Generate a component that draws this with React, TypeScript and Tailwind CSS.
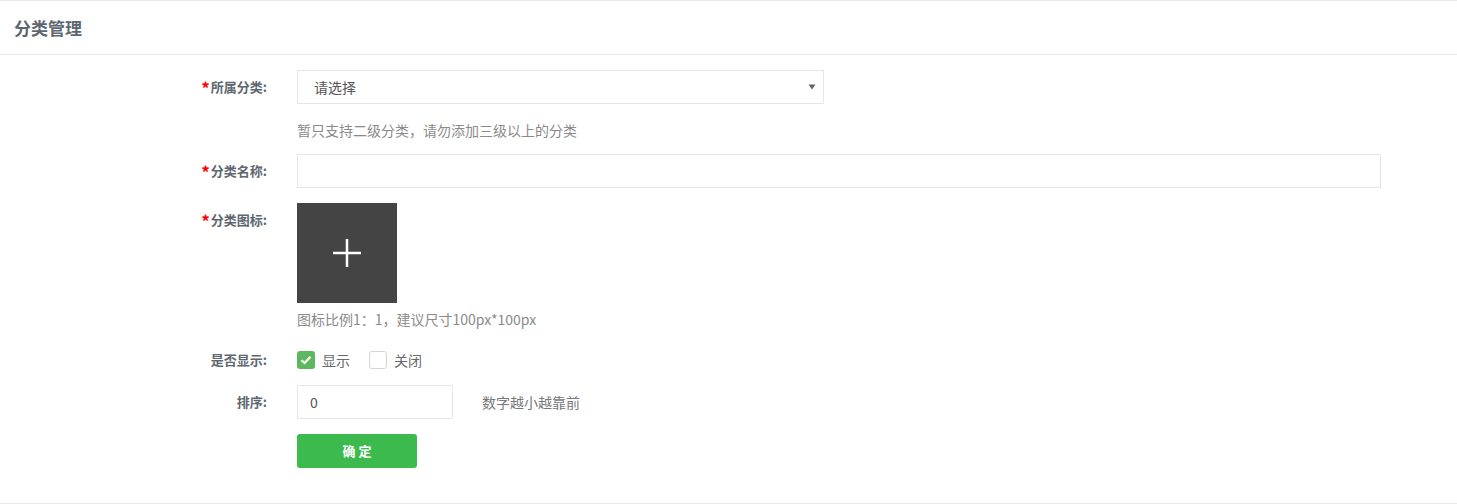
const font = {
  fontFamily: '"Noto Sans CJK SC", "Liberation Sans", sans-serif',
};

function Label({ text, required }: { text: string; required?: boolean }) {
  return (
    <div className="w-[267px] shrink-0 text-right text-[13px] font-bold leading-[34px] text-[#5e6770]">
      {required && (
        <span className="relative top-[3px] mr-[1px] text-[17px] leading-none text-[#ff0000]">*</span>
      )}
      {text}
    </div>
  );
}

function Check({ checked, label }: { checked?: boolean; label: string }) {
  return (
    <label className="flex items-center gap-[7px]">
      {checked ? (
        <span className="flex h-[18px] w-[18px] items-center justify-center rounded-[3px] bg-[#5cb85c]">
          <svg viewBox="0 0 18 18" className="h-[18px] w-[18px]">
            <path d="M4.5 9.2 L7.6 12 L13.5 5.8" fill="none" stroke="#fff" strokeWidth="2.2" />
          </svg>
        </span>
      ) : (
        <span className="h-[18px] w-[18px] rounded-[3px] border border-[#d5d5d5] bg-white" />
      )}
      <span className="text-[14px] text-[#676a6c]">{label}</span>
    </label>
  );
}

export default function App() {
  return (
    <div className="w-[1457px] bg-white" style={font}>
      <div className="flex h-[55px] items-center border-y border-[#e7eaec] pl-[14px]">
        <h5 className="text-[17px] font-bold text-[#5e6770]">分类管理</h5>
      </div>

      <div className="border-b border-[#e7eaec] pb-[35px] pt-[15px]">
        {/* 所属分类 */}
        <div className="flex">
          <Label text="所属分类:" required />
          <div className="ml-[30px]">
            <div className="flex h-[34px] w-[527px] items-center justify-between border border-[#e5e6e7] pl-[16px] pr-[7px]">
              <span className="text-[14px] text-[#555]">请选择</span>
              <svg viewBox="0 0 8 6" className="h-[6px] w-[8px]">
                <path d="M0.5 0.5 L7.5 0.5 L4 5.5 Z" fill="#5e6770" />
              </svg>
            </div>
            <p className="mt-[16px] text-[14px] leading-[20px] text-[#8a8a8a]">
              暂只支持二级分类，请勿添加三级以上的分类
            </p>
          </div>
        </div>

        {/* 分类名称 */}
        <div className="mt-[14px] flex">
          <Label text="分类名称:" required />
          <input
            className="ml-[30px] h-[34px] w-[1084px] border border-[#e5e6e7] px-3 text-[14px] outline-none"
            defaultValue=""
          />
        </div>

        {/* 分类图标 */}
        <div className="mt-[15px] flex">
          <Label text="分类图标:" required />
          <div className="ml-[30px]">
            <div className="flex h-[100px] w-[100px] items-center justify-center bg-[#444444]">
              <svg viewBox="0 0 28 28" className="h-[28px] w-[28px]">
                <path d="M14 0 V28 M0 14 H28" stroke="#fff" strokeWidth="2.5" />
              </svg>
            </div>
            <p className="mt-[6px] text-[14px] leading-[20px] text-[#8a8a8a]">
              图标比例1：1，建议尺寸100px*100px
            </p>
          </div>
        </div>

        {/* 是否显示 */}
        <div className="mt-[14px] flex items-center">
          <Label text="是否显示:" />
          <div className="ml-[30px] flex items-center gap-[19px]">
            <Check checked label="显示" />
            <Check label="关闭" />
          </div>
        </div>

        {/* 排序 */}
        <div className="mt-[8px] flex items-center">
          <Label text="排序:" />
          <input
            className="ml-[30px] h-[34px] w-[156px] border border-[#e5e6e7] px-[12px] text-[14px] text-[#555] outline-none"
            defaultValue="0"
          />
          <span className="ml-[29px] text-[14px] text-[#777]">数字越小越靠前</span>
        </div>

        <div className="mt-[15px] flex">
          <div className="w-[267px] shrink-0" />
          <button className="ml-[30px] h-[34px] w-[120px] rounded-[3px] bg-[#3dba4e] text-[13px] font-bold text-white">
            确 定
          </button>
        </div>
      </div>
    </div>
  );
}
